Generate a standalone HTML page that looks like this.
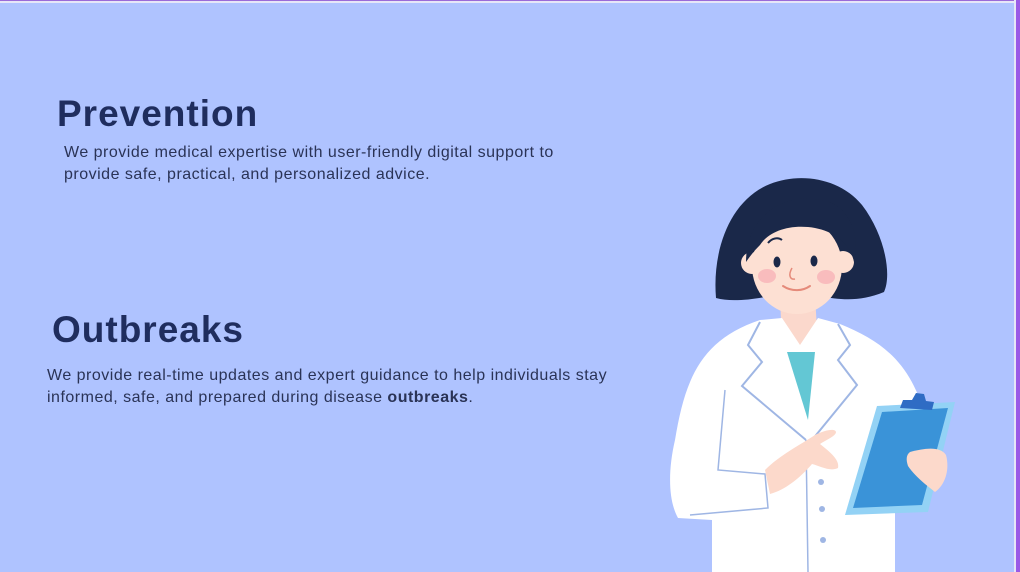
<!DOCTYPE html>
<html><head><meta charset="utf-8"><style>
html,body{margin:0;padding:0}
body{width:1020px;height:572px;overflow:hidden;background:#afc3ff;position:relative;font-family:"Liberation Sans",sans-serif}
.top{position:absolute;left:0;top:0;width:1020px;height:1px;background:#9a6ad8}
.top2{position:absolute;left:0;top:1px;width:1014px;height:2px;background:#e6e6f8}
.r1{position:absolute;left:1014px;top:0;width:2px;height:572px;background:#e6e6f8}
.r2{position:absolute;left:1016px;top:0;width:4px;height:572px;background:#9a5ae6}
h1{position:absolute;margin:0;font-size:37px;font-weight:bold;color:#1f2d5e;line-height:1;letter-spacing:1px}
p{position:absolute;margin:0;font-size:16px;line-height:22px;color:#2a3356;letter-spacing:0.5px;white-space:nowrap}
</style></head><body>
<div class="top"></div><div class="top2"></div><div class="r1"></div><div class="r2"></div>
<h1 style="left:57px;top:95px">Prevention</h1>
<p style="left:64px;top:142px">We provide medical expertise with user-friendly digital support to<br>provide safe, practical, and personalized advice.</p>
<h1 style="left:52px;top:311px">Outbreaks</h1>
<p style="left:47px;top:365px">We provide real-time updates and expert guidance to help individuals stay<br>informed, safe, and prepared during disease <b>outbreaks</b>.</p>
<svg style="position:absolute;left:0;top:0" width="1020" height="572" viewBox="0 0 1020 572">
<path d="M716,298 C712,250 730,200 770,184 C800,172 840,178 862,205 C885,235 892,275 884,292 C860,302 840,300 820,296 L770,296 C750,300 730,302 716,298 Z" fill="#1a2849"/>
<path d="M780,296 L815,296 L818,345 L782,345 Z" fill="#fbd8cc"/>
<circle cx="752" cy="263" r="11" fill="#fde0d3"/>
<circle cx="843" cy="262" r="11" fill="#fde0d3"/>
<ellipse cx="797" cy="266" rx="45" ry="48" fill="#fde0d3"/>
<path d="M746,262 C746,212 790,188 832,203 C852,213 860,240 854,262 C850,243 835,232 815,228 C792,224 770,230 760,245 C755,250 750,256 746,262 Z" fill="#1a2849"/>
<ellipse cx="767" cy="276" rx="9" ry="7" fill="#f7b3b8" opacity=".8"/>
<ellipse cx="826" cy="277" rx="9" ry="7" fill="#f7b3b8" opacity=".8"/>
<ellipse cx="777" cy="262" rx="3.5" ry="5.5" fill="#1a2849"/>
<ellipse cx="814" cy="261" rx="3.5" ry="5.5" fill="#1a2849"/>
<path d="M768,243 C772,238 778,237 782,240" stroke="#1a2849" stroke-width="2" fill="none"/>
<path d="M792,268 C788,275 790,280 795,279" stroke="#e58a7a" stroke-width="1.5" fill="none"/>
<path d="M783,286 C792,292 803,291 810,286" stroke="#e58a7a" stroke-width="2" fill="none" stroke-linecap="round"/>
<path d="M760,320 L782,318 L800,345 L818,318 L840,324 C880,340 905,360 920,400 L895,420 L895,572 L712,572 L712,520 L678,518 C668,500 668,470 675,440 C685,380 700,340 760,320 Z" fill="#ffffff"/>
<path d="M787,352 L815,352 L808,420 Z" fill="#63c7d4"/>
<path d="M760,322 L748,345 L762,362 L742,386 L806,440" stroke="#9fb6e4" stroke-width="2" fill="none"/>
<path d="M838,324 L850,345 L838,360 L857,385 L812,440" stroke="#9fb6e4" stroke-width="2" fill="none"/>
<path d="M806,440 L808,572" stroke="#9fb6e4" stroke-width="1.5"/>
<path d="M725,390 L718,470 L765,474 L768,508 L690,515" stroke="#9fb6e4" stroke-width="1.5" fill="none"/>
<circle cx="821" cy="482" r="3" fill="#9fb6e4"/>
<circle cx="822" cy="509" r="3" fill="#9fb6e4"/>
<circle cx="823" cy="540" r="3" fill="#9fb6e4"/>
<path d="M765,470 C780,455 800,445 815,435 C825,430 835,428 836,432 C836,436 826,440 820,444 C830,452 840,460 838,468 C830,472 820,466 812,464 C800,478 785,490 770,494 Z" fill="#fcd9cb"/>
<path d="M877,406 L955,402 L928,512 L845,515 Z" fill="#93d2f5"/>
<path d="M882,412 L948,408 L922,505 L853,508 Z" fill="#3a93d8"/>
<path d="M900,408 L903,400 L912,400 L916,393 L924,394 L926,401 L934,402 L932,410 Z" fill="#2f6cc4"/>
<path d="M910,452 C925,448 940,446 946,455 C950,470 945,485 935,492 L925,484 C918,478 912,472 908,466 C906,460 906,455 910,452 Z" fill="#fcd9cb"/>
</svg>
</body></html>
